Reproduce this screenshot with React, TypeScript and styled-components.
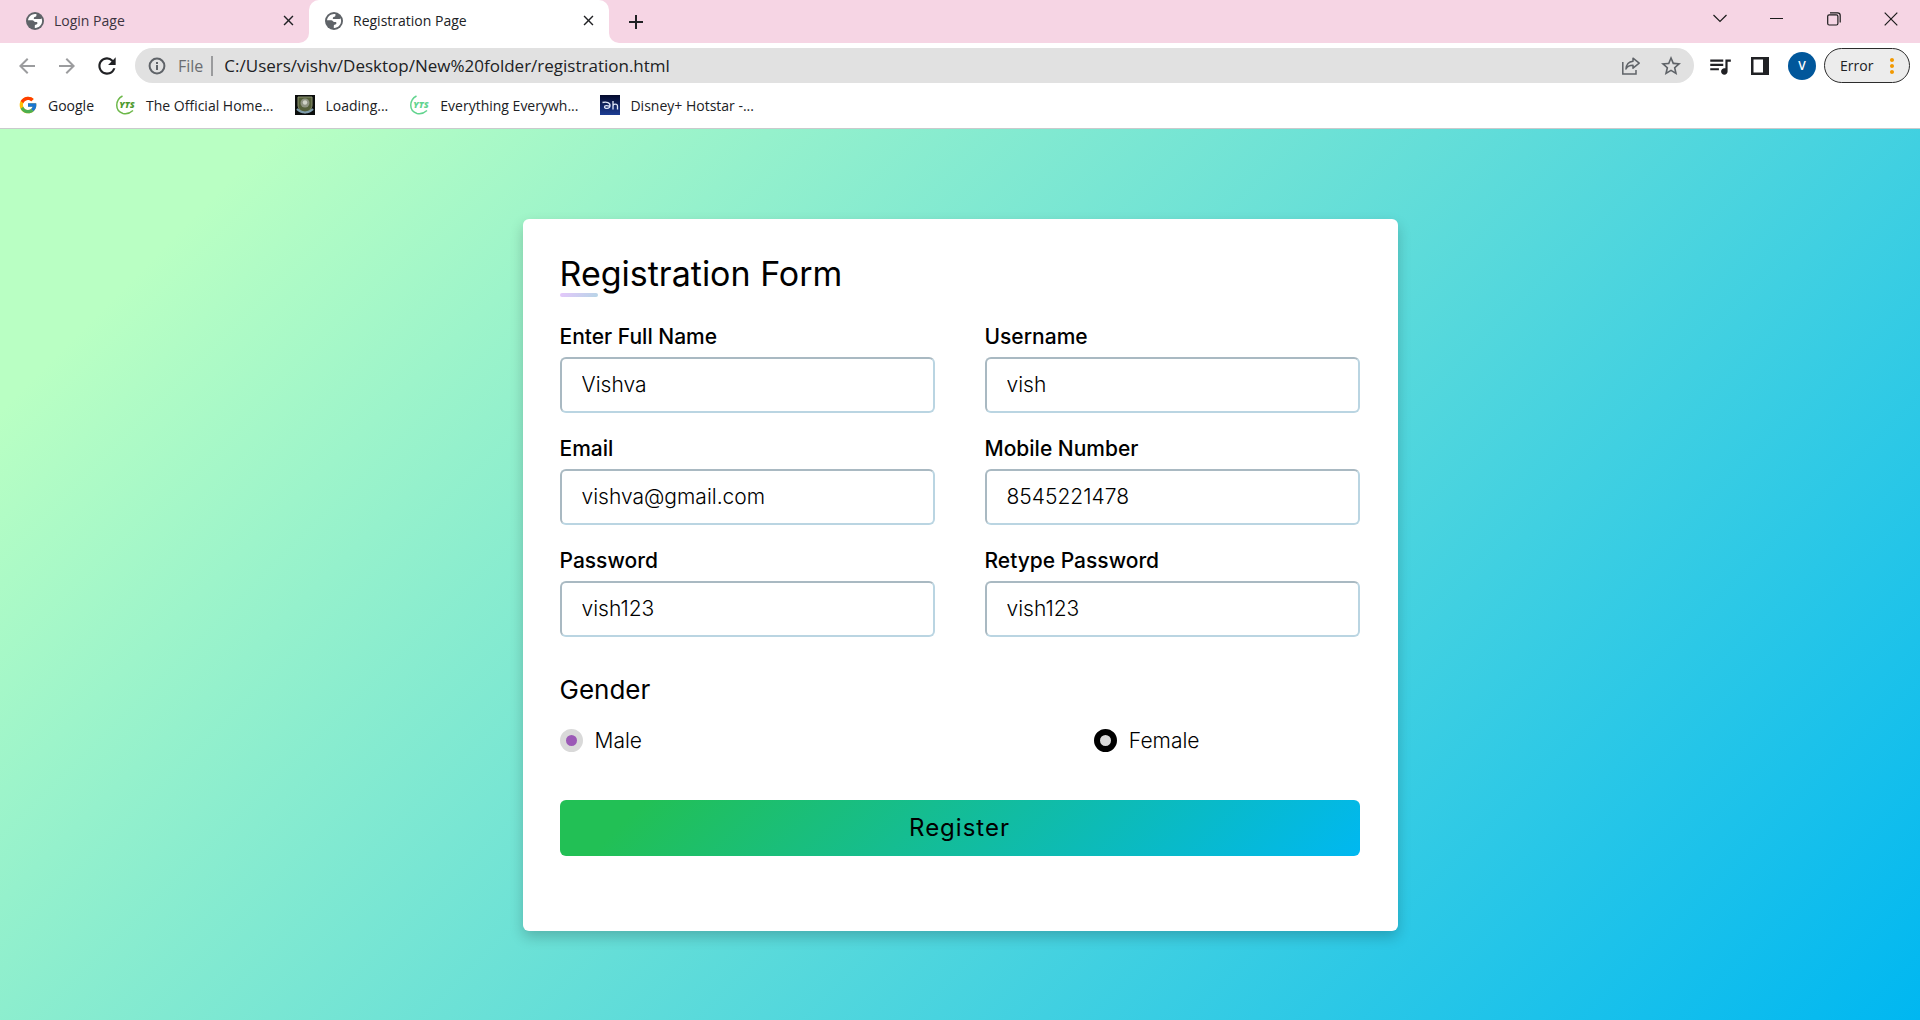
import React, { useState } from "react";
import styled, { createGlobalStyle, css } from "styled-components";
import { FcGoogle } from "react-icons/fc";
import {
  MdClose,
  MdAdd,
  MdArrowBack,
  MdArrowForward,
  MdRefresh,
  MdStarOutline,
  MdQueueMusic,
  MdMoreVert,
} from "react-icons/md";

const GlobalStyle = createGlobalStyle`
  *, *::before, *::after { box-sizing: border-box; }
  html, body, #root { height: 100%; }
  body { margin: 0; }
  button, input { font: inherit; color: inherit; }
`;

const Browser = styled.div`
  display: flex;
  flex-direction: column;
  min-height: 100%;
  font-family: "Open Sans", "Noto Sans", sans-serif;
  font-size: 14px;
  color: #202124;
`;

/* Tab strip */

const TabStrip = styled.header`
  display: flex;
  align-items: stretch;
  height: 43px;
  background: #f6d5e4;
`;

const Tab = styled.div<{ $active?: boolean }>`
  display: flex;
  align-items: center;
  gap: 10px;
  width: ${(p) => (p.$active ? 300 : 309)}px;
  padding: 0 12px 2px ${(p) => (p.$active ? 16 : 26)}px;
  line-height: 20px;
  color: ${(p) => (p.$active ? "#202124" : "#3c3440")};
  ${(p) =>
    p.$active
      ? css`
          background: #fff;
          border-radius: 10px 10px 0 0;
        `
      : css`
          background: #f6d5e4;
          border-radius: 0 0 10px 0;
        `}
`;

const TabCorner = styled.div<{ $grow?: boolean }>`
  display: flex;
  flex: ${(p) => (p.$grow ? "1" : "none")};
  background: #fff;
`;

const TabTitle = styled.span`
  flex: 1;
  white-space: nowrap;
`;

const IconButton = styled.button<{ $size?: number; $color?: string }>`
  display: flex;
  align-items: center;
  justify-content: center;
  flex: none;
  width: ${(p) => p.$size ?? 40}px;
  height: ${(p) => p.$size ?? 40}px;
  padding: 0;
  border: 0;
  background: none;
  color: ${(p) => p.$color ?? "#202124"};
`;

const StripRest = styled.div`
  flex: 1;
  display: flex;
  justify-content: space-between;
  background: #f6d5e4;
  border-radius: 0 0 0 10px;
  padding: 0 1px 0 12px;
`;

const NewTab = styled(IconButton)`
  align-self: center;
`;

const WindowControls = styled.div`
  display: flex;
  height: 37px;
`;

const WindowButton = styled.button`
  display: flex;
  align-items: center;
  justify-content: center;
  width: 57px;
  padding: 0;
  border: 0;
  background: none;
  color: #1b1b1b;
`;

/* Toolbar */

const Toolbar = styled.nav`
  display: flex;
  align-items: center;
  height: 45px;
  padding: 0 10px 0 7px;
  background: #fff;
`;

const AddressBar = styled.div`
  flex: 1;
  display: flex;
  align-items: center;
  height: 35px;
  margin: 0 6px 0 8px;
  padding: 0 3px 0 13px;
  border-radius: 18px;
  background: #e1e1e1;
  font-size: 17px;
`;

const Scheme = styled.span`
  margin-left: 12px;
  padding-right: 8px;
  border-right: 2px solid #9a9b9d;
  font-size: 16px;
  line-height: 20px;
  color: #6a6d71;
`;

const AddressInput = styled.input`
  flex: 1;
  min-width: 0;
  padding: 0 0 0 11px;
  border: 0;
  outline: 0;
  background: none;
  color: #202124;
`;

const Avatar = styled.button`
  width: 28px;
  height: 28px;
  margin: 0 8px;
  padding: 0;
  border: 0;
  border-radius: 50%;
  background: #01579b;
  color: #fff;
  font-size: 12px;
  font-weight: 600;
`;

const ErrorPill = styled.button`
  display: flex;
  align-items: center;
  justify-content: space-between;
  width: 86px;
  height: 35px;
  padding: 0 5px 0 15px;
  border: 1px solid #2c2c2c;
  border-radius: 18px;
  background: #ececec;
  color: #202124;
`;

/* Bookmarks */

const Bookmarks = styled.nav`
  display: flex;
  align-items: center;
  gap: 22px;
  height: 41px;
  padding: 0 20px 6px 18px;
  border-bottom: 1px solid #c9cacc;
  background: #fff;
`;

const Bookmark = styled.a`
  display: flex;
  align-items: center;
  gap: 10px;
  color: #202124;
  text-decoration: none;
  white-space: nowrap;
`;

/* Page */

const Page = styled.main`
  flex: 1;
  display: flex;
  align-items: center;
  justify-content: center;
  padding: 12px;
  background: linear-gradient(135deg, #b9ffc3 10%, #00b7f1 100%);
  font-family: Inter, "Open Sans", sans-serif;
  font-size: 21px;
  line-height: 30px;
  color: #000;
`;

const Card = styled.form`
  width: 100%;
  max-width: 875px;
  padding: 31px 38px 75px 37px;
  border-radius: 6px;
  background: #fff;
  box-shadow: 0 6px 14px rgba(0, 0, 0, 0.2);
`;

const Title = styled.h1`
  position: relative;
  margin: 0 0 25px;
  font-size: 34px;
  font-weight: 400;
  line-height: 47px;

  &::before {
    content: "";
    position: absolute;
    left: 0;
    bottom: 0;
    width: 38px;
    height: 4px;
    border-radius: 4px;
    background: linear-gradient(135deg, #e5c7fb, #b6d5e6);
  }
`;

const Fields = styled.div`
  display: grid;
  grid-template-columns: 1fr 1fr;
  gap: 21px 50px;
`;

const Field = styled.label`
  display: flex;
  flex-direction: column;
  gap: 5px;
  font-weight: 500;
`;

const TextInput = styled.input`
  width: 100%;
  height: 56px;
  padding: 0 20px;
  border: 2px solid;
  border-color: #a9b9c2 #bad5e2 #bad5e2 #a9b9c2;
  border-radius: 6px;
  outline: 0;
  background: #fff;
  font-weight: 300;
`;

const Gender = styled.fieldset`
  width: 80%;
  margin: 34px 0 0;
  padding: 0;
  border: 0;
`;

const Legend = styled.legend`
  padding: 0;
  font-size: 26px;
  font-weight: 400;
  line-height: 38px;
`;

const Choices = styled.div`
  display: flex;
  justify-content: space-between;
  margin-top: 17px;
`;

const Choice = styled.label`
  display: flex;
  align-items: center;
  gap: 12px;
  font-weight: 300;
`;

const Radio = styled.input`
  appearance: none;
  width: 23px;
  height: 23px;
  margin: 0;
  border: 6px solid #000;
  border-radius: 50%;
  background: #d9d9d9;

  &:checked {
    border-color: #d9d9d9;
    background: #9b59b6;
  }
`;

const Submit = styled.button`
  width: 100%;
  height: 56px;
  margin-top: 44px;
  border: 0;
  border-radius: 6px;
  background: linear-gradient(135deg, #22c055 10%, #00b8f1 100%);
  color: #000;
  font-size: 24px;
  font-weight: 400;
  letter-spacing: 1px;
`;

const GlobeIcon = () => (
  <svg width="18" height="18" viewBox="0 0 18 18" aria-hidden>
    <circle cx="9" cy="9" r="9" fill="#5f6368" />
    <path
      fill="#fff"
      d="M9 1.900C5.500 2 2.400 4.600 2 8.200h4.200c1.800 0 1.800 1.900 3.200 1.900h1.400c1.300.8.700 2.600-1 2.700-.8 0-1 .6-1 1.300v1.800c4 .3 7.300-3 7.300-6.900 0-1-.2-2-.6-2.800-.9 1.300-2.400.8-3.900.8H8c-.6-1.200.2-2.300 1.500-2.300.7 0 .9-.5.9-1.200V2C10 1.900 9.500 1.900 9 1.900z"
    />
  </svg>
);

const InfoIcon = () => (
  <svg width="18" height="18" viewBox="0 0 18 18" fill="none" stroke="#5f6368" strokeWidth="2" aria-hidden>
    <circle cx="9" cy="9" r="7.400" />
    <path d="M9 8v5M9 5v2" />
  </svg>
);

const ShareIcon = () => (
  <svg width="20" height="20" viewBox="0 0 20 20" fill="none" stroke="#5f6368" strokeWidth="1.500" aria-hidden>
    <path d="M1.800 6v12H15v-4" />
    <path d="M12 2.200l6.200 5-6.200 5V9.300c-3.500 0-5.600 1-7 3.700.3-4.500 2.700-7.300 7-7.800z" strokeLinejoin="round" />
  </svg>
);

const PanelIcon = () => (
  <svg width="18" height="18" viewBox="0 0 18 18" aria-hidden>
    <path fill="#202124" fillRule="evenodd" d="M0 0h18v18H0zM2.500 2.500v13H12v-13z" />
  </svg>
);

const YtsIcon = ({ color, ring }: { color: string; ring: string }) => (
  <svg width="20" height="20" viewBox="0 0 20 20" aria-hidden>
    <path d="M6.500 1C-1 5-1.500 16 7 18.500c3.500.9 7-.3 10-3" fill="none" stroke={ring} strokeWidth="1.500" />
    <text x="11" y="13" textAnchor="middle" fontFamily="Open Sans, sans-serif" fontSize="9" fontWeight="800" fontStyle="italic" fill={color}>
      YTS
    </text>
  </svg>
);

const CrestIcon = () => (
  <svg width="20" height="20" viewBox="0 0 20 20" aria-hidden>
    <rect width="20" height="20" fill="#0b0d0c" />
    <path d="M3 2h14v8c0 4-3 6.500-7 8-4-1.500-7-4-7-8z" fill="#55603a" stroke="#8b9270" />
    <circle cx="10" cy="8" r="4.500" fill="#8e9382" />
    <circle cx="10" cy="7.500" r="2.200" fill="#d0d3c8" />
    <path d="M2 14c4 4.500 12 4.500 16 0" fill="none" stroke="#7f9dac" strokeWidth="2" />
  </svg>
);

const HotstarIcon = () => (
  <svg width="20" height="20" viewBox="0 0 20 20" aria-hidden>
    <defs>
      <linearGradient id="hotstar" x1="0" y1="0" x2="0" y2="1">
        <stop offset="0" stopColor="#040a2c" />
        <stop offset="1" stopColor="#1d3d94" />
      </linearGradient>
    </defs>
    <rect width="20" height="20" fill="url(#hotstar)" />
    <g fill="none" stroke="#dfe6f7" strokeWidth="1.300">
      <path d="M2.500 7.500c4-1 8 0 7.500 3.500-.3 3-5.500 3-5.500 1s3-1.500 5-.8" />
      <path d="M13 6v8.500M13 11c0-2.500 4.500-2.500 4.500 0v3.500" />
    </g>
  </svg>
);

const ChevronIcon = () => (
  <svg width="14" height="9" viewBox="0 0 14 9" fill="none" stroke="currentColor" strokeWidth="1.200" aria-hidden>
    <path d="M.5 1L7 7.500 13.500 1" />
  </svg>
);

const MinimizeIcon = () => (
  <svg width="13" height="13" viewBox="0 0 13 13" aria-hidden>
    <path d="M0 6h13v1H0z" fill="currentColor" />
  </svg>
);

const RestoreIcon = () => (
  <svg width="14" height="14" viewBox="0 0 14 14" fill="none" stroke="currentColor" strokeWidth="1.200" aria-hidden>
    <rect x=".7" y="2.800" width="10.200" height="10.200" rx="1.500" />
    <path d="M3 .8h7.500c1.700 0 2.700 1 2.700 2.700v7" />
  </svg>
);

const CrossIcon = () => (
  <svg width="14" height="14" viewBox="0 0 14 14" fill="none" stroke="currentColor" strokeWidth="1.200" aria-hidden>
    <path d="M.7.7l12.600 12.600M13.300.7L.7 13.300" />
  </svg>
);

const bookmarks = [
  { title: "Google", icon: <FcGoogle size={20} /> },
  { title: "The Official Home...", icon: <YtsIcon color="#4f9a2e" ring="#6db84a" /> },
  { title: "Loading...", icon: <CrestIcon /> },
  { title: "Everything Everywh...", icon: <YtsIcon color="#62d48f" ring="#62d48f" /> },
  { title: "Disney+ Hotstar -...", icon: <HotstarIcon /> },
];

const initialFields = [
  { name: "fullName", label: "Enter Full Name", value: "Vishva" },
  { name: "username", label: "Username", value: "vish" },
  { name: "email", label: "Email", value: "vishva@gmail.com" },
  { name: "mobile", label: "Mobile Number", value: "8545221478" },
  { name: "password", label: "Password", value: "vish123" },
  { name: "retype", label: "Retype Password", value: "vish123" },
];

export default function App() {
  const [gender, setGender] = useState("Male");

  return (
    <Browser>
      <GlobalStyle />
      <TabStrip>
        <TabCorner>
          <Tab>
            <GlobeIcon />
            <TabTitle>Login Page</TabTitle>
            <IconButton $size={18} aria-label="Close Login Page">
              <MdClose size={17} />
            </IconButton>
          </Tab>
        </TabCorner>
        <Tab $active>
          <GlobeIcon />
          <TabTitle>Registration Page</TabTitle>
          <IconButton $size={18} aria-label="Close Registration Page">
            <MdClose size={17} />
          </IconButton>
        </Tab>
        <TabCorner $grow>
          <StripRest>
            <NewTab $size={30} aria-label="New tab">
              <MdAdd size={24} />
            </NewTab>
            <WindowControls>
              <WindowButton aria-label="Search tabs"><ChevronIcon /></WindowButton>
              <WindowButton aria-label="Minimize"><MinimizeIcon /></WindowButton>
              <WindowButton aria-label="Restore"><RestoreIcon /></WindowButton>
              <WindowButton aria-label="Close window"><CrossIcon /></WindowButton>
            </WindowControls>
          </StripRest>
        </TabCorner>
      </TabStrip>

      <Toolbar aria-label="Navigation">
        <IconButton $color="#9b9c9e" aria-label="Back"><MdArrowBack size={24} /></IconButton>
        <IconButton $color="#9b9c9e" aria-label="Forward"><MdArrowForward size={24} /></IconButton>
        <IconButton aria-label="Reload"><MdRefresh size={26} /></IconButton>
        <AddressBar>
          <InfoIcon />
          <Scheme>File</Scheme>
          <AddressInput
            aria-label="Address"
            defaultValue="C:/Users/vishv/Desktop/New%20folder/registration.html"
          />
          <IconButton aria-label="Share"><ShareIcon /></IconButton>
          <IconButton $color="#5f6368" aria-label="Bookmark this page"><MdStarOutline size={24} /></IconButton>
        </AddressBar>
        <IconButton aria-label="Media controls"><MdQueueMusic size={26} /></IconButton>
        <IconButton aria-label="Side panel"><PanelIcon /></IconButton>
        <Avatar aria-label="Profile">V</Avatar>
        <ErrorPill>
          Error
          <MdMoreVert size={24} color="#f29900" />
        </ErrorPill>
      </Toolbar>

      <Bookmarks aria-label="Bookmarks">
        {bookmarks.map((b) => (
          <Bookmark key={b.title} href="#">
            {b.icon}
            {b.title}
          </Bookmark>
        ))}
      </Bookmarks>

      <Page>
        <Card onSubmit={(e) => e.preventDefault()}>
          <Title>Registration Form</Title>
          <Fields>
            {initialFields.map((f) => (
              <Field key={f.name}>
                {f.label}
                <TextInput name={f.name} defaultValue={f.value} />
              </Field>
            ))}
          </Fields>
          <Gender>
            <Legend>Gender</Legend>
            <Choices>
              {["Male", "Female"].map((g) => (
                <Choice key={g}>
                  <Radio
                    type="radio"
                    name="gender"
                    value={g}
                    checked={gender === g}
                    onChange={() => setGender(g)}
                  />
                  {g}
                </Choice>
              ))}
            </Choices>
          </Gender>
          <Submit type="submit">Register</Submit>
        </Card>
      </Page>
    </Browser>
  );
}
